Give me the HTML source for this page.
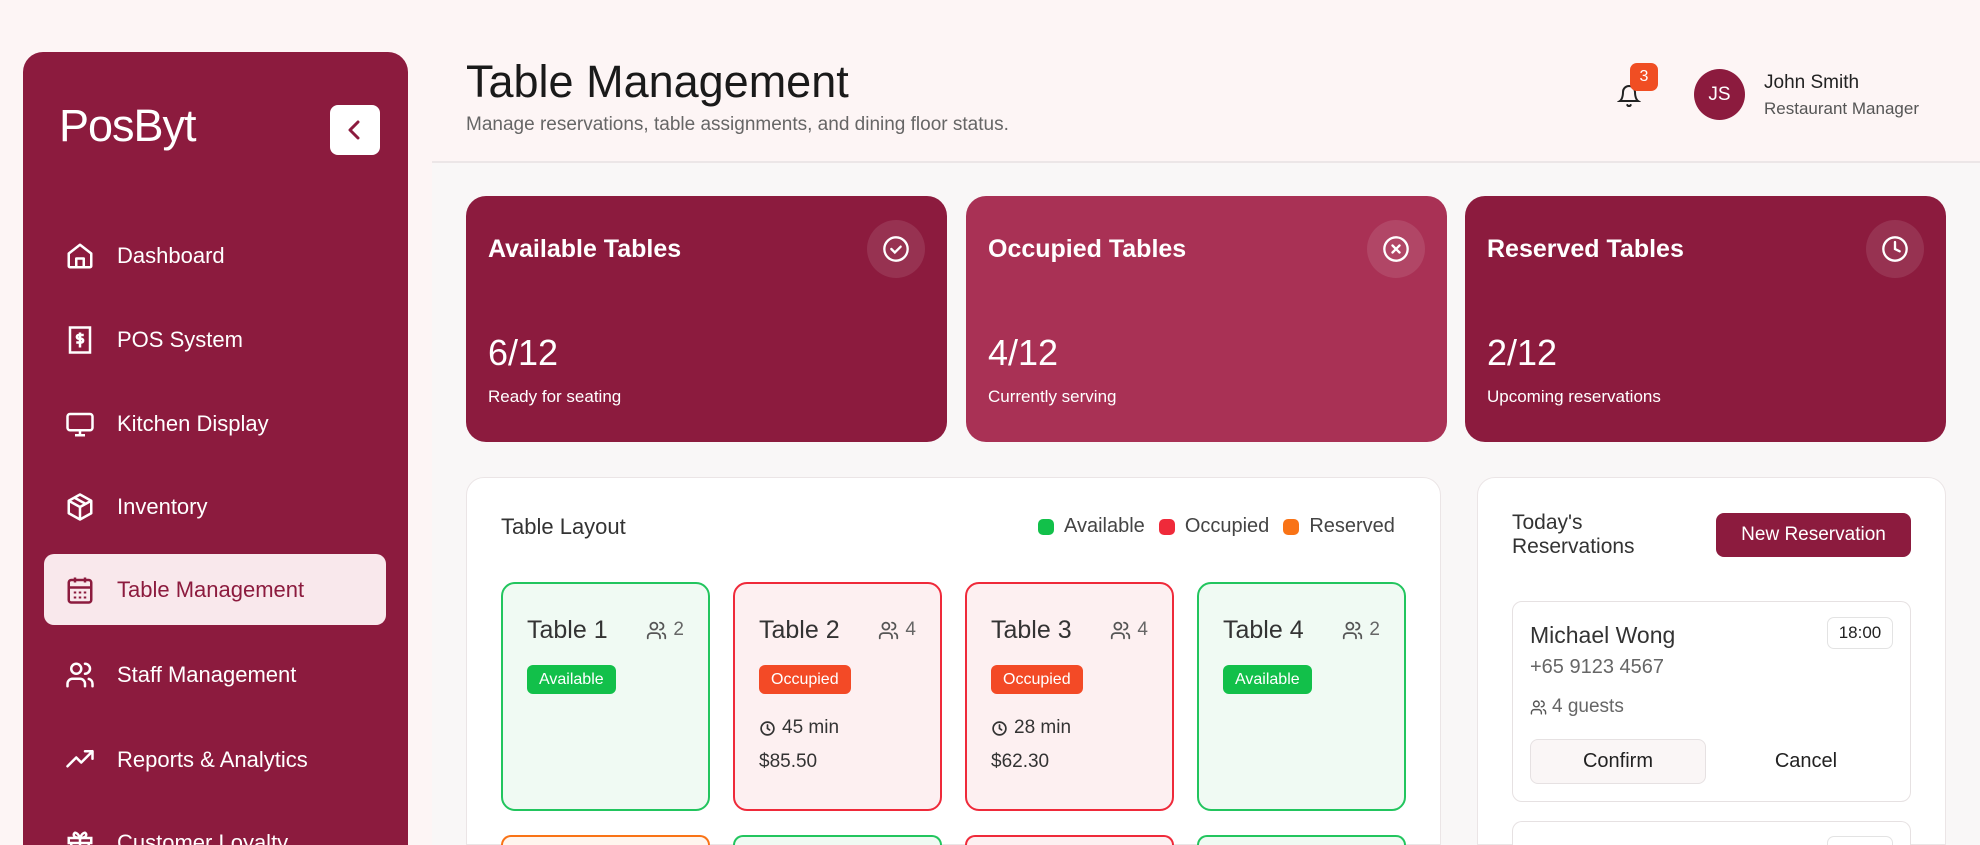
<!DOCTYPE html>
<html style="width:1980px;height:845px;overflow:hidden"><head><meta charset="utf-8"><style>
*{box-sizing:border-box;margin:0;padding:0}
body{width:1980px;height:845px;overflow:hidden;background:#fdf5f5;font-family:"Liberation Sans",sans-serif;color:#222;position:relative}
.abs{position:absolute}
.side{left:23px;top:52px;width:385px;height:793px;background:#8c1b3e;border-radius:20px 20px 0 0}
.logo{left:59px;top:100px;color:#fff;font-size:45px;letter-spacing:-1px}
.coll{left:330px;top:105px;width:50px;height:50px;background:#fff;border-radius:8px}
.nav{left:44px;width:342px;height:71px;display:flex;align-items:center;color:#fff;font-size:22px}
.nav svg{margin-left:21px;margin-right:22px}
.nav.act{background:#f9e8ec;color:#8c1b3e;border-radius:10px}
.main{left:432px;top:161px;width:1548px;height:684px;background:#f9f7f7;border-top:2px solid #ece6e7}
.stat{top:196px;width:481px;height:246px;border-radius:20px;color:#fff}
.stat h3{position:absolute;left:22px;top:39px;font-size:25px;font-weight:bold}
.stat .ic{position:absolute;right:22px;top:24px;width:58px;height:58px;border-radius:50%;background:rgba(255,255,255,.1);display:flex;align-items:center;justify-content:center}
.stat .v{position:absolute;left:22px;top:136px;font-size:36px;font-weight:300}
.stat .s{position:absolute;left:22px;top:191px;font-size:17px}
.panel{background:#fff;border:1px solid #ebe5e6;border-radius:18px 18px 0 0}
.tc{top:582px;width:209px;height:229px;border:2px solid;border-radius:14px}
.tc.g{border-color:#22c55e;background:#f0faf3}
.tc.r{border-color:#ef2a3a;background:#fdf0f1}
.tc.o{border-color:#f97316;background:#fff5ee}
.tc .n{position:absolute;left:24px;top:32px;font-size:25px;color:#333}
.tc .p{position:absolute;right:24px;top:35px;font-size:19px;color:#666;display:flex;align-items:center;gap:6px}
.tc .b{position:absolute;left:24px;top:81px;height:29px;padding:0 12px;border-radius:6px;color:#fff;font-size:16px;line-height:29px}
.b.g{background:#12c04a}.b.r{background:#f34a26}
.tc .m{position:absolute;left:24px;font-size:19px;color:#333;display:flex;align-items:center;gap:6px}
.dot{width:16px;height:16px;border-radius:5px;display:inline-block}
</style></head><body>
<div class="abs side"></div>
<div class="abs logo">PosByt</div>
<div class="abs coll"><svg width="50" height="50" viewBox="0 0 50 50"><path d="M28 17l-8 8 8 8" stroke="#8c1b3e" stroke-width="3" fill="none" stroke-linecap="round" stroke-linejoin="round"/></svg></div>

<div class="abs nav" style="top:220px"><svg width="30" height="30" viewBox="0 0 24 24" fill="none" stroke="#fff" stroke-width="2" stroke-linejoin="round"><path d="M3 10l9-7 9 7v10a1 1 0 0 1-1 1H4a1 1 0 0 1-1-1z"/><path d="M9 21v-7h6v7"/></svg>Dashboard</div>
<div class="abs nav" style="top:304px"><svg width="30" height="30" viewBox="0 0 24 24" fill="none" stroke="#fff" stroke-width="2"><rect x="4" y="2" width="16" height="20"/><path d="M15 8h-4a1.5 1.5 0 0 0 0 3h2a1.5 1.5 0 0 1 0 3H9M12 6v12"/></svg>POS System</div>
<div class="abs nav" style="top:388px"><svg width="30" height="30" viewBox="0 0 24 24" fill="none" stroke="#fff" stroke-width="2"><rect x="2" y="4" width="20" height="13" rx="2"/><path d="M8 21h8M12 17v4"/></svg>Kitchen Display</div>
<div class="abs nav" style="top:471px"><svg width="30" height="30" viewBox="0 0 24 24" fill="none" stroke="#fff" stroke-width="2" stroke-linejoin="round"><path d="M12 2l9 5v10l-9 5-9-5V7z"/><path d="M3 7l9 5 9-5M12 12v10M7.5 4.5l9 5"/></svg>Inventory</div>
<div class="abs nav act" style="top:554px"><svg width="30" height="30" viewBox="0 0 24 24" fill="none" stroke="#8c1b3e" stroke-width="2"><rect x="3" y="4" width="18" height="18" rx="2"/><path d="M3 10h18M8 2v4M16 2v4"/><path d="M7 14h2M11 14h2M15 14h2M7 18h2M11 18h2M15 18h2" stroke-width="1.6"/></svg>Table Management</div>
<div class="abs nav" style="top:639px"><svg width="30" height="30" viewBox="0 0 24 24" fill="none" stroke="#fff" stroke-width="2" stroke-linecap="round"><circle cx="9" cy="7" r="4"/><path d="M2 21v-2a4 4 0 0 1 4-4h6a4 4 0 0 1 4 4v2M16 3a4 4 0 0 1 0 8M22 21v-2a4 4 0 0 0-3-3.9"/></svg>Staff Management</div>
<div class="abs nav" style="top:724px"><svg width="30" height="30" viewBox="0 0 24 24" fill="none" stroke="#fff" stroke-width="2" stroke-linecap="round" stroke-linejoin="round"><path d="M2 17l7-7 4 4 9-9M16 5h6v6"/></svg>Reports &amp; Analytics</div>
<div class="abs nav" style="top:807px"><svg width="30" height="30" viewBox="0 0 24 24" fill="none" stroke="#fff" stroke-width="2"><rect x="3" y="8" width="18" height="4"/><path d="M12 8v13M19 12v9H5v-9M12 8C10 3 7 3 7 5.5S12 8 12 8zM12 8c2-5 5-5 5-2.5S12 8 12 8z"/></svg>Customer Loyalty</div>

<div class="abs" style="left:466px;top:56px;font-size:45px;color:#1a1a1a">Table Management</div>
<div class="abs" style="left:466px;top:114px;font-size:19px;color:#666">Manage reservations, table assignments, and dining floor status.</div>
<svg class="abs" style="left:1617px;top:84px" width="24" height="24" viewBox="0 0 24 24" fill="none" stroke="#222" stroke-width="2" stroke-linecap="round"><path d="M6 8a6 6 0 0 1 12 0c0 7 3 9 3 9H3s3-2 3-9M10.3 21a1.9 1.9 0 0 0 3.4 0"/></svg>
<div class="abs" style="left:1630px;top:63px;width:28px;height:28px;border-radius:7px;background:#f04e23;color:#fff;font-size:16px;text-align:center;line-height:28px">3</div>
<div class="abs" style="left:1694px;top:69px;width:51px;height:51px;border-radius:50%;background:#8c1b3e;color:#fff;font-size:19px;text-align:center;line-height:51px">JS</div>
<div class="abs" style="left:1764px;top:72px;font-size:19px;color:#222">John Smith</div>
<div class="abs" style="left:1764px;top:99px;font-size:17px;color:#555">Restaurant Manager</div>

<div class="abs main"></div>

<div class="abs stat" style="left:466px;background:#8c1b3e"><h3>Available Tables</h3><div class="ic"><svg width="28" height="28" viewBox="0 0 24 24" fill="none" stroke="#fff" stroke-width="2" stroke-linecap="round"><circle cx="12" cy="12" r="10"/><path d="M8 12l3 3 5-5"/></svg></div><div class="v">6/12</div><div class="s">Ready for seating</div></div>
<div class="abs stat" style="left:966px;background:#a93155"><h3>Occupied Tables</h3><div class="ic"><svg width="28" height="28" viewBox="0 0 24 24" fill="none" stroke="#fff" stroke-width="2" stroke-linecap="round"><circle cx="12" cy="12" r="10"/><path d="M9 9l6 6M15 9l-6 6"/></svg></div><div class="v">4/12</div><div class="s">Currently serving</div></div>
<div class="abs stat" style="left:1465px;background:#8c1b3e"><h3>Reserved Tables</h3><div class="ic"><svg width="28" height="28" viewBox="0 0 24 24" fill="none" stroke="#fff" stroke-width="2" stroke-linecap="round"><circle cx="12" cy="12" r="10"/><path d="M12 6v6l4 2"/></svg></div><div class="v">2/12</div><div class="s">Upcoming reservations</div></div>

<div class="abs panel" style="left:466px;top:477px;width:975px;height:368px"></div>
<div class="abs" style="left:501px;top:514px;font-size:22px;color:#333">Table Layout</div>
<div class="abs" style="left:1038px;top:515px;font-size:20px;color:#444;display:flex;align-items:center;gap:10px"><span class="dot" style="background:#12c04a"></span>Available <span class="dot" style="background:#ef2a3a;margin-left:4px"></span>Occupied <span class="dot" style="background:#f97316;margin-left:4px"></span>Reserved</div>

<svg width="0" height="0" style="position:absolute"><defs><symbol id="ppl" viewBox="0 0 24 24"><g fill="none" stroke="#555" stroke-width="2" stroke-linecap="round"><circle cx="9" cy="7" r="4"/><path d="M2 21v-2a4 4 0 0 1 4-4h6a4 4 0 0 1 4 4v2M16 3a4 4 0 0 1 0 8M22 21v-2a4 4 0 0 0-3-3.9"/></g></symbol><symbol id="clk" viewBox="0 0 24 24"><g fill="none" stroke="#333" stroke-width="2.4" stroke-linecap="round"><circle cx="12" cy="12" r="9"/><path d="M12 7v5l3 2"/></g></symbol></defs></svg>

<div class="abs tc g" style="left:501px"><div class="n">Table 1</div><div class="p"><svg width="21" height="21"><use href="#ppl"/></svg>2</div><div class="b g">Available</div></div>
<div class="abs tc r" style="left:733px"><div class="n">Table 2</div><div class="p"><svg width="21" height="21"><use href="#ppl"/></svg>4</div><div class="b r">Occupied</div><div class="m" style="top:133px"><svg width="17" height="17"><use href="#clk"/></svg>45 min</div><div class="m" style="top:167px">$85.50</div></div>
<div class="abs tc r" style="left:965px"><div class="n">Table 3</div><div class="p"><svg width="21" height="21"><use href="#ppl"/></svg>4</div><div class="b r">Occupied</div><div class="m" style="top:133px"><svg width="17" height="17"><use href="#clk"/></svg>28 min</div><div class="m" style="top:167px">$62.30</div></div>
<div class="abs tc g" style="left:1197px"><div class="n">Table 4</div><div class="p"><svg width="21" height="21"><use href="#ppl"/></svg>2</div><div class="b g">Available</div></div>
<div class="abs tc o" style="left:501px;top:835px;height:10px;border-bottom:none;border-radius:14px 14px 0 0"></div>
<div class="abs tc g" style="left:733px;top:835px;height:10px;border-bottom:none;border-radius:14px 14px 0 0"></div>
<div class="abs tc r" style="left:965px;top:835px;height:10px;border-bottom:none;border-radius:14px 14px 0 0"></div>
<div class="abs tc g" style="left:1197px;top:835px;height:10px;border-bottom:none;border-radius:14px 14px 0 0"></div>

<div class="abs panel" style="left:1477px;top:477px;width:469px;height:368px"></div>
<div class="abs" style="left:1512px;top:511px;font-size:21px;line-height:24px;color:#333">Today's<br>Reservations</div>
<div class="abs" style="left:1716px;top:513px;width:195px;height:44px;border-radius:8px;background:#8c1b3e;color:#fff;font-size:19px;text-align:center;line-height:44px">New Reservation</div>
<div class="abs" style="left:1512px;top:601px;width:399px;height:201px;border:1px solid #e6e1e2;border-radius:10px;background:#fff"></div>
<div class="abs" style="left:1530px;top:622px;font-size:23px;color:#333">Michael Wong</div>
<div class="abs" style="left:1827px;top:617px;width:66px;height:32px;border:1px solid #e3e3e3;border-radius:7px;font-size:17px;text-align:center;line-height:30px;color:#222">18:00</div>
<div class="abs" style="left:1530px;top:656px;font-size:20px;color:#666">+65 9123 4567</div>
<div class="abs" style="left:1530px;top:696px;font-size:19px;color:#666;display:flex;align-items:center;gap:5px"><svg width="17" height="17"><use href="#ppl"/></svg>4 guests</div>
<div class="abs" style="left:1530px;top:739px;width:176px;height:45px;border:1px solid #e6e1e2;border-radius:8px;background:#faf6f6;font-size:20px;text-align:center;line-height:43px;color:#222">Confirm</div>
<div class="abs" style="left:1718px;top:739px;width:176px;height:45px;font-size:20px;text-align:center;line-height:45px;color:#222">Cancel</div>
<div class="abs" style="left:1512px;top:821px;width:399px;height:24px;border:1px solid #e6e1e2;border-bottom:none;border-radius:10px 10px 0 0;background:#fff"></div>
<div class="abs" style="left:1827px;top:836px;width:66px;height:9px;border:1px solid #e3e3e3;border-bottom:none;border-radius:7px 7px 0 0"></div>
</body></html>
